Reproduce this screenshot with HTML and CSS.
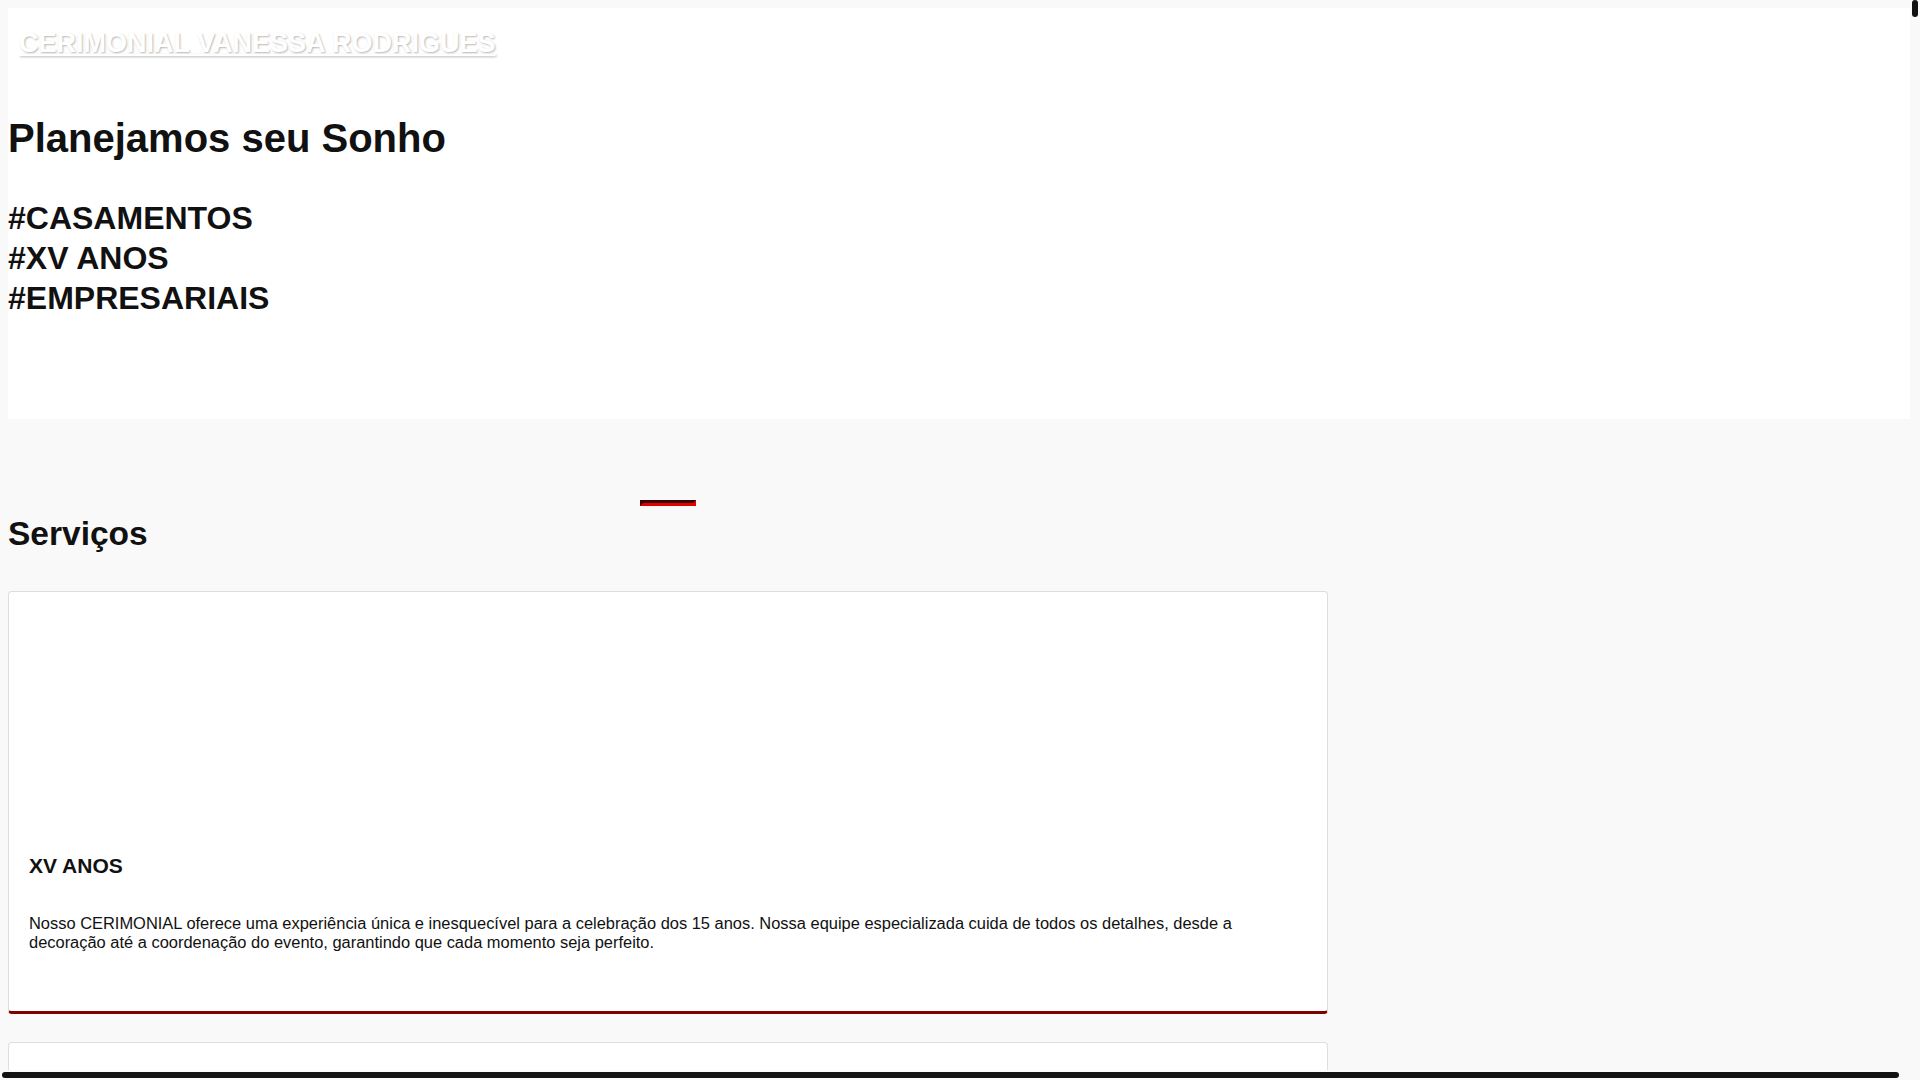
FILE: index.html
```html
<!DOCTYPE html>
<html lang="pt-BR">
<head>
<meta charset="utf-8">
<title>Cerimonial Vanessa Rodrigues</title>
<link rel="stylesheet" href="styles.css">
</head>
<body>
<header class="hero">
  <div class="brand"><a href="#" class="brand-link">CERIMONIAL VANESSA RODRIGUES</a></div>
  <h1 class="hero-title">Planejamos seu Sonho</h1>
  <div class="hero-tags">
    <div class="tag">#CASAMENTOS</div>
    <div class="tag">#XV ANOS</div>
    <div class="tag">#EMPRESARIAIS</div>
  </div>
</header>

<main class="services">
  <hr class="divider">
  <h2 class="section-title">Serviços</h2>

  <article class="card">
    <div class="card-media"></div>
    <h3 class="card-title">XV ANOS</h3>
    <p class="card-text">Nosso CERIMONIAL oferece uma experiência única e inesquecível para a celebração dos 15 anos. Nossa equipe especializada cuida de todos os detalhes, desde a decoração até a coordenação do evento, garantindo que cada momento seja perfeito.</p>
  </article>

  <article class="card">
    <div class="card-media"></div>
    <h3 class="card-title">CASAMENTOS</h3>
    <p class="card-text">Do planejamento ao grande dia, acompanhamos cada etapa do seu casamento com carinho e organização, para que você viva esse momento com tranquilidade.</p>
  </article>

  <article class="card">
    <div class="card-media"></div>
    <h3 class="card-title">EMPRESARIAIS</h3>
    <p class="card-text">Eventos corporativos conduzidos com profissionalismo, pontualidade e atenção aos detalhes, fortalecendo a imagem da sua empresa.</p>
  </article>
</main>

<div class="scrollbar scrollbar-v" aria-hidden="true"><div class="thumb thumb-v"></div></div>
<div class="scrollbar scrollbar-h" aria-hidden="true"><div class="thumb thumb-h"></div></div>
</body>
</html>
```

FILE: styles.css
```css
html {
  background: #f9f9f9;
}

body {
  margin: 8px;
  background: #f9f9f9;
  overflow-x: hidden;
  font-family: "Liberation Sans", Arial, sans-serif;
  color: #111;
}

.hero {
  width: calc(100vw - 18px);
  box-sizing: border-box;
  background: #fff;
  padding: 20px 12px 101px 0;
}

.brand {
  padding-left: 11px;
  line-height: 31px;
}

.brand-link {
  font-size: 27px;
  font-weight: bold;
  color: #fff;
  text-decoration: underline;
  text-shadow: 1px 1px 2px rgba(0, 0, 0, 0.28);
}

.hero-title {
  margin: 53px 0 0;
  font-size: 40px;
  font-weight: bold;
  line-height: 46px;
}

.hero-tags {
  margin-top: 37px;
  font-size: 32px;
  font-weight: bold;
  line-height: 40px;
}

.services {
  max-width: 1320px;
  padding-bottom: 40px;
}

.divider {
  box-sizing: content-box;
  width: 50px;
  height: 0;
  margin: 81px auto 0;
  border-style: solid;
  border-width: 3px;
  border-color: #3a0000 #e00000 #e00000 #3a0000;
}

.section-title {
  margin: 9px 0 0;
  font-size: 33.5px;
  font-weight: bold;
  line-height: 38px;
}

.card {
  margin-top: 38px;
  background: #fff;
  border: 1px solid #ddd;
  border-bottom: 3px solid #800000;
  border-radius: 4px;
  padding: 20px;
}

.card + .card {
  margin-top: 28px;
}

.card-media {
  height: 222px;
}

.card-title {
  margin: 20px 0 0;
  font-size: 21px;
  font-weight: bold;
  line-height: 23.5px;
}

.card-text {
  margin: 36px 0 38.5px;
  font-size: 16.45px;
  line-height: 19.5px;
}

/* window scrollbars drawn over the page edge */
.scrollbar {
  position: fixed;
  background: #f9f9f9;
  box-sizing: border-box;
}

.scrollbar-v {
  top: 0;
  right: 0;
  width: 10px;
  height: 100vh;
  padding: 0 2px;
}

.scrollbar-h {
  left: 0;
  bottom: 0;
  width: calc(100vw - 10px);
  height: 10px;
  padding: 2px 11px 2px 2px;
}

.thumb {
  background: #111;
  border-radius: 3px;
}

.thumb-v {
  height: 17px;
}

.thumb-h {
  height: 6px;
}
```
